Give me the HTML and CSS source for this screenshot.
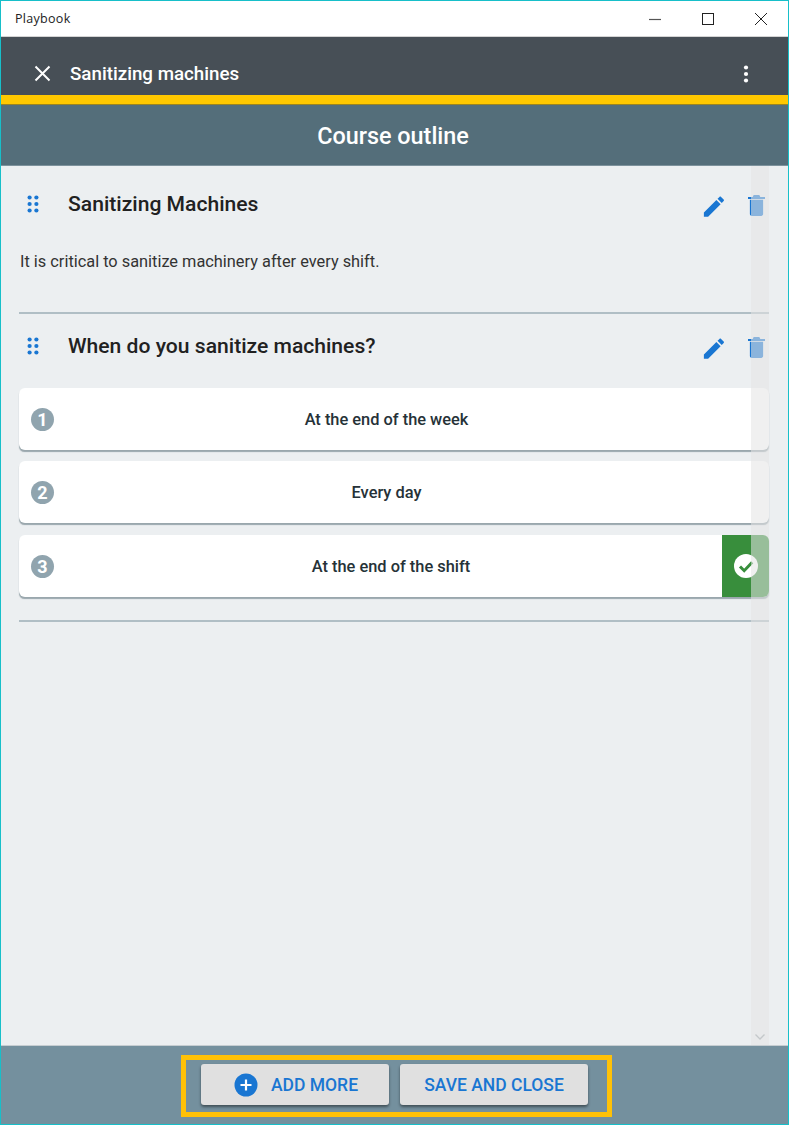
FILE: index.html
```html
<!DOCTYPE html>
<html lang="en">
<head>
<meta charset="utf-8">
<title>Playbook</title>
<link rel="stylesheet" href="styles.css">
</head>
<body>
<div class="window">
  <div class="titlebar">
    <span class="app-name">Playbook</span>
    <div class="win-controls">
      <svg width="12" height="12" viewBox="0 0 12 12"><path d="M0 6.500H12" stroke="#555" stroke-width="1.200"/></svg>
      <svg width="12" height="12" viewBox="0 0 12 12"><rect x=".5" y=".5" width="11" height="11" fill="none" stroke="#222" stroke-width="1"/></svg>
      <svg width="12" height="12" viewBox="0 0 12 12"><path d="M0 0L12 12M12 0L0 12" stroke="#222" stroke-width="1"/></svg>
    </div>
  </div>
  <header class="appbar">
    <svg class="close-icon" width="17" height="17" viewBox="0 0 17 17"><path d="M1.500 1.500L15.500 15.500M15.500 1.500L1.500 15.500" stroke="#fff" stroke-width="2"/></svg>
    <span class="appbar-title">Sanitizing machines</span>
    <svg class="more-icon" width="6" height="18" viewBox="0 0 6 18"><circle cx="3" cy="2.500" r="2.100"/><circle cx="3" cy="9" r="2.100"/><circle cx="3" cy="15.500" r="2.100"/></svg>
  </header>
  <div class="accent"></div>
  <div class="subheader">Course outline</div>
  <main class="content">
    <section class="block block-text">
      <div class="block-head">
        <svg class="drag" width="12" height="18" viewBox="0 0 12 18"><g fill="#1976d2"><circle cx="2.600" cy="2.500" r="2.100"/><circle cx="9.400" cy="2.500" r="2.100"/><circle cx="2.600" cy="9" r="2.100"/><circle cx="9.400" cy="9" r="2.100"/><circle cx="2.600" cy="15.500" r="2.100"/><circle cx="9.400" cy="15.500" r="2.100"/></g></svg>
        <h2 class="block-title">Sanitizing Machines</h2>
        <svg class="edit" width="22" height="22" viewBox="0 0 25 24"><path fill="#1976d2" d="M1 23v-4.800L15.200 4l4.800 4.800L5.800 23H1zM21.300 7.500l-4.800-4.800 2.200-2.200c.5-.5 1.300-.5 1.800 0l3 3c.5.5.5 1.300 0 1.800l-2.200 2.200z"/></svg>
        <svg class="trash" width="17" height="21" viewBox="0 0 18 22"><path fill="#1976d2" d="M2 5h14v15c0 1.100-.9 2-2 2H4c-1.100 0-2-.9-2-2V5zM0 2h5l1-2h6l1 2h5v2H0V2z"/></svg>
      </div>
      <p class="block-body">It is critical to sanitize machinery after every shift.</p>
    </section>
    <section class="block block-question">
      <div class="block-head">
        <svg class="drag" width="12" height="18" viewBox="0 0 12 18"><g fill="#1976d2"><circle cx="2.600" cy="2.500" r="2.100"/><circle cx="9.400" cy="2.500" r="2.100"/><circle cx="2.600" cy="9" r="2.100"/><circle cx="9.400" cy="9" r="2.100"/><circle cx="2.600" cy="15.500" r="2.100"/><circle cx="9.400" cy="15.500" r="2.100"/></g></svg>
        <h2 class="block-title">When do you sanitize machines?</h2>
        <svg class="edit" width="22" height="22" viewBox="0 0 25 24"><path fill="#1976d2" d="M1 23v-4.800L15.200 4l4.800 4.800L5.800 23H1zM21.300 7.500l-4.800-4.800 2.200-2.200c.5-.5 1.300-.5 1.800 0l3 3c.5.5.5 1.300 0 1.800l-2.200 2.200z"/></svg>
        <svg class="trash" width="17" height="21" viewBox="0 0 18 22"><path fill="#1976d2" d="M2 5h14v15c0 1.100-.9 2-2 2H4c-1.100 0-2-.9-2-2V5zM0 2h5l1-2h6l1 2h5v2H0V2z"/></svg>
      </div>
      <ol class="options">
        <li class="option"><span class="num">1</span><span class="option-text">At the end of the week</span></li>
        <li class="option"><span class="num">2</span><span class="option-text">Every day</span></li>
        <li class="option option-correct"><span class="num">3</span><span class="option-text">At the end of the shift</span>
          <span class="correct-mark"><svg width="24" height="24" viewBox="0 0 24 24"><circle cx="12" cy="12" r="12" fill="#fff"/><path d="M6 12.500l4.200 4.200 8-8.500" fill="none" stroke="#388e3c" stroke-width="3"/></svg></span>
        </li>
      </ol>
    </section>
    <div class="scroll-track">
      <svg width="10" height="6" viewBox="0 0 10 6"><path d="M.5.5L5 5 9.500.5" fill="none" stroke="#c4c8ca" stroke-width="1.300"/></svg>
    </div>
  </main>
  <footer class="footer">
    <div class="actions">
      <button class="btn btn-icon" type="button">
        <svg width="24" height="24" viewBox="0 0 24 24"><circle cx="12" cy="12" r="11.500" fill="#1976d2"/><path d="M12 6.500v11M6.500 12h11" stroke="#fff" stroke-width="2.200"/></svg>
        <span>Add more</span>
      </button>
      <button class="btn" type="button"><span>Save and close</span></button>
    </div>
  </footer>
</div>
</body>
</html>
```
FILE: styles.css
```css
* { box-sizing: border-box; }
html, body { margin: 0; padding: 0; }
body { font-family: Roboto, sans-serif; background: #fff; }
.window {
  width: 789px;
  height: 1125px;
  border: 1px solid #17bfc9;
  display: flex;
  flex-direction: column;
  overflow: hidden;
}
.titlebar {
  flex: none;
  height: 36px;
  background: #fff;
  display: flex;
  align-items: center;
  justify-content: space-between;
  padding: 0 21px 0 14px;
  border-bottom: 1px solid #d4d4d4;
}
.app-name { font-family: "Open Sans", sans-serif; font-size: 12.500px; letter-spacing: .3px; color: #222; }
.win-controls { display: flex; gap: 41px; align-items: center; }
.appbar {
  flex: none;
  height: 58px;
  background: #474f56;
  display: flex;
  align-items: center;
  padding: 15px 39px 0 33px;
  color: #fff;
}
.close-icon { flex: none; }
.appbar-title { font-size: 18.750px; font-weight: 500; margin-left: 19px; flex: 1; }
.more-icon { fill: #fff; flex: none; }
.accent {
  flex: none;
  height: 10px;
  background: #ffc800;
  border-bottom: 1px solid #9b8420;
}
.subheader {
  flex: none;
  height: 61px;
  background: #546e7a;
  color: #fff;
  font-size: 23.400px;
  font-weight: 500;
  display: flex;
  align-items: center;
  justify-content: center;
  padding: 2px 3px 0 0;
  border-bottom: 1px solid #7d929c;
}
.content {
  flex: 1;
  position: relative;
  background: #eceff1;
  padding: 0 19px 0 18px;
}
.block { border-bottom: 2px solid #b0bec5; }
.block-text { height: 148px; padding-top: 20px; }
.block-question { height: 308px; padding-top: 14px; }
.block-head { display: flex; align-items: center; height: 36px; padding-left: 8px; }
.drag { flex: none; }
.block-title {
  flex: 1;
  margin: 0 0 2px 29px;
  font-size: 21.100px;
  font-weight: 500;
  color: #212121;
}
.edit { flex: none; margin: 5px 23px 0 0; }
.trash { flex: none; margin: 3px 4px 0 0; }
.block-body {
  margin: 30px 0 0 1px;
  font-size: 16.350px;
  line-height: 20px;
  color: #333;
}
.options {
  list-style: none;
  margin: 24px 0 0;
  padding: 0;
  display: flex;
  flex-direction: column;
  gap: 11px;
}
.option {
  height: 62px;
  background: #fff;
  border-radius: 6px;
  box-shadow: 0 2px 1px -0.500px #9aa7ad;
  display: flex;
  align-items: center;
  padding: 0 50px 0 12px;
  overflow: hidden;
}
.option-correct { padding-right: 0; margin-top: 1px; }
.option-correct .option-text { padding-left: 8px; }
.num {
  flex: none;
  width: 23px;
  height: 23px;
  border-radius: 50%;
  background: #90a4ae;
  color: #fff;
  font-size: 18px;
  font-weight: 700;
  display: flex;
  align-items: center;
  justify-content: center;
}
.option-text {
  flex: 1;
  text-align: center;
  font-size: 16.400px;
  font-weight: 500;
  color: #263238;
}
.correct-mark {
  flex: none;
  align-self: stretch;
  width: 47px;
  margin-left: 2px;
  background: #388e3c;
  display: flex;
  align-items: center;
  justify-content: center;
}
.scroll-track {
  position: absolute;
  top: 0;
  bottom: 0;
  left: 750px;
  width: 18px;
  background: rgba(229, 229, 229, .56);
  display: flex;
  align-items: flex-end;
  justify-content: center;
  padding-bottom: 5px;
}
.footer {
  flex: none;
  height: 79px;
  background: #74909e;
  border-top: 1px solid #c6cdd1;
  display: flex;
  justify-content: center;
  padding: 9px 0 0 3px;
}
.actions {
  width: 431px;
  height: 62px;
  border: 5px solid #ffc107;
  display: flex;
  justify-content: center;
  align-items: flex-start;
  gap: 11px;
  padding: 4px 3px 0 0;
}
.btn {
  width: 188px;
  height: 41px;
  border: 0;
  border-radius: 3px;
  background: #e0e0e0;
  box-shadow: 0 2px 3px rgba(0, 0, 0, .45);
  color: #1976d2;
  font-family: Roboto, sans-serif;
  font-size: 17.500px;
  font-weight: 500;
  text-transform: uppercase;
  display: flex;
  align-items: center;
  justify-content: center;
  gap: 13px;
  padding: 0;
}
.btn-icon { padding-left: 2px; }
```
